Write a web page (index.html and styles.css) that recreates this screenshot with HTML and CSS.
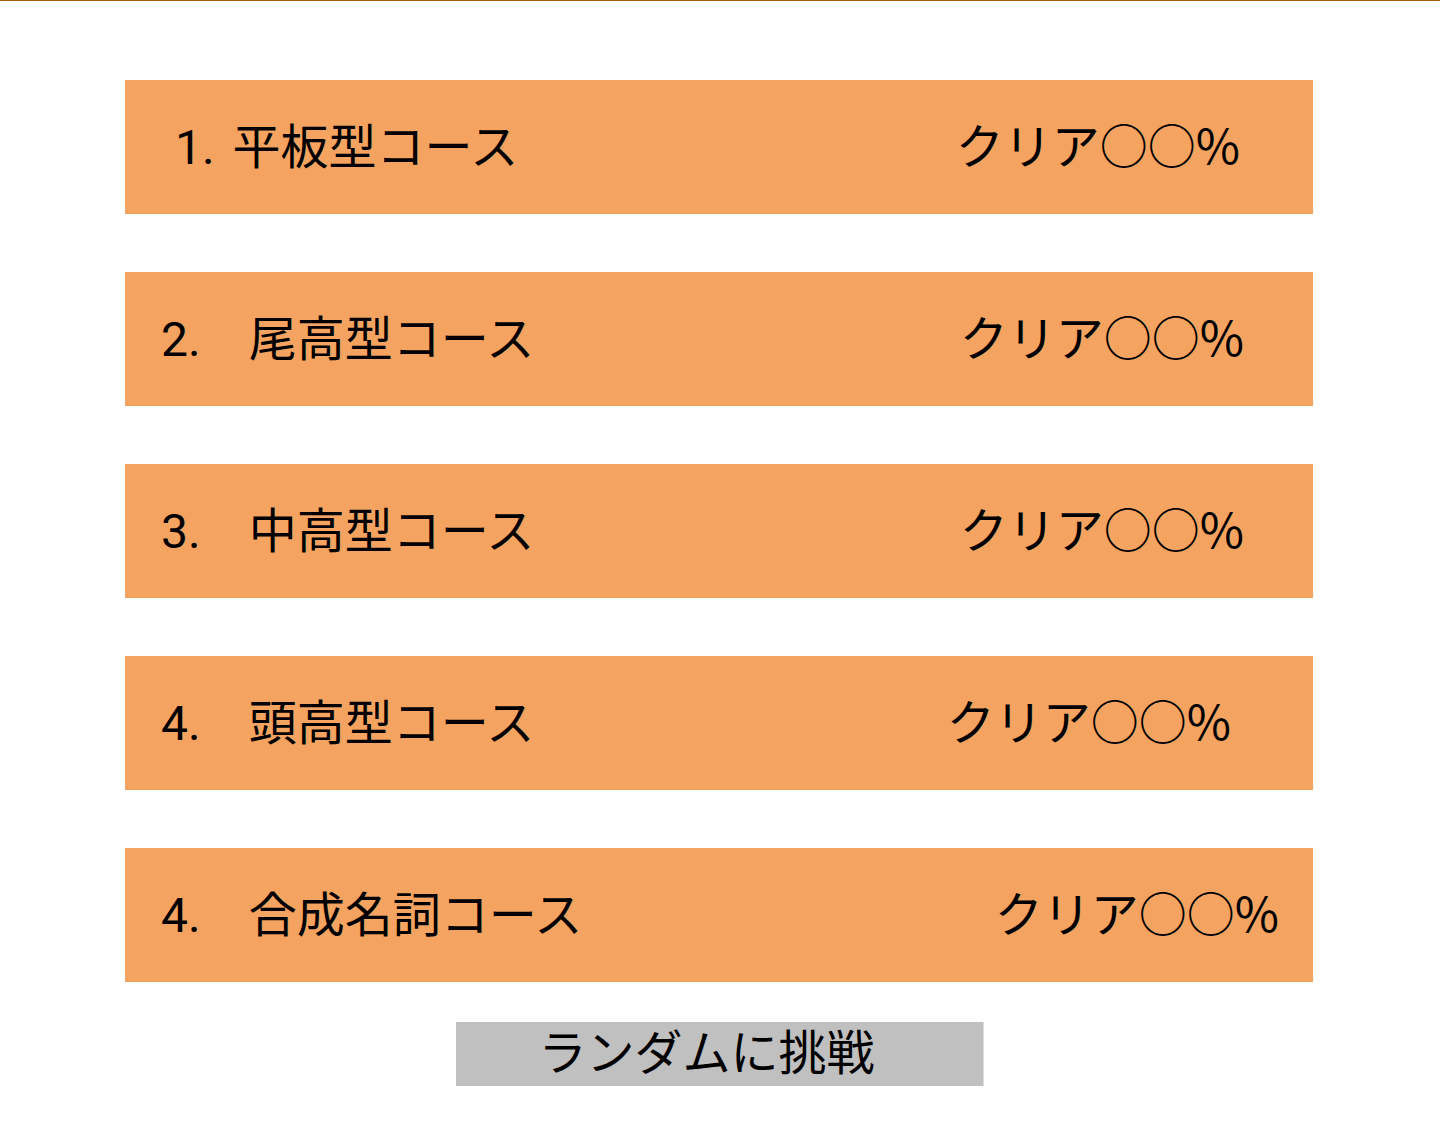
FILE: index.html
```html
<!DOCTYPE html>
<html lang="ja">
<head>
    <meta charset="UTF-8">
    <meta name="viewport" content="width=device-width, initial-scale=1.0">
    <title>コース選択</title>
    <link rel="stylesheet" href="styles.css">
</head>
<body>
    <div id="course-select">
        <!-- コース一覧 -->
        <ul class="course-list">
            <li class="course course-flat">
                <span class="course-name">1. 平板型コース</span>
                <span class="course-rate">クリア○○%</span>
            </li>
            <li class="course">
                <span class="course-name">2.　尾高型コース</span>
                <span class="course-rate">クリア○○%</span>
            </li>
            <li class="course">
                <span class="course-name">3.　中高型コース</span>
                <span class="course-rate">クリア○○%</span>
            </li>
            <li class="course course-head">
                <span class="course-name">4.　頭高型コース</span>
                <span class="course-rate">クリア○○%</span>
            </li>
            <li class="course course-compound">
                <span class="course-name">4.　合成名詞コース</span>
                <span class="course-rate">クリア○○%</span>
            </li>
        </ul>

        <button id="random-challenge">ランダムに挑戦</button>
    </div>
</body>
</html>
```

FILE: styles.css
```css
body {
    margin: 0;
    padding: 0;
    border-top: 1px solid #a65d10;
    background-color: #ffffff;
    color: #000000;
    font-family: Roboto, "Noto Sans CJK JP", sans-serif;
}

#course-select {
    padding: 79px 0 0 125px;
}

.course-list {
    list-style: none;
    margin: 0;
    padding: 0;
    width: 1188px;
    display: flex;
    flex-direction: column;
    gap: 58px;
}

.course {
    box-sizing: border-box;
    display: flex;
    flex-wrap: wrap;
    align-content: center;
    align-items: baseline;
    height: 134px;
    padding: 0 0 4px 36px;
    background-color: #f4a460;
    font-size: 48px;
    line-height: 1;
}

.course-flat {
    padding-left: 50px;
}

.course-flat .course-name {
    word-spacing: 6px;
}

.course-rate {
    margin-left: auto;
    margin-right: 69px;
    font-family: "Noto Sans CJK JP", sans-serif;
}

.course-flat .course-rate {
    margin-right: 73px;
}

.course-head .course-rate {
    margin-right: 82px;
}

.course-compound .course-rate {
    margin-right: 34px;
}

#random-challenge {
    display: flex;
    align-items: center;
    justify-content: center;
    width: 528px;
    height: 64px;
    margin: 40px 0 0 331px;
    padding: 0 26px 0 0;
    border: none;
    border-right: 1px solid #dcdcdc;
    border-radius: 0;
    background-color: #c0c0c0;
    color: #000000;
    font-family: inherit;
    font-size: 48px;
    line-height: 1;
    cursor: pointer;
}
```
